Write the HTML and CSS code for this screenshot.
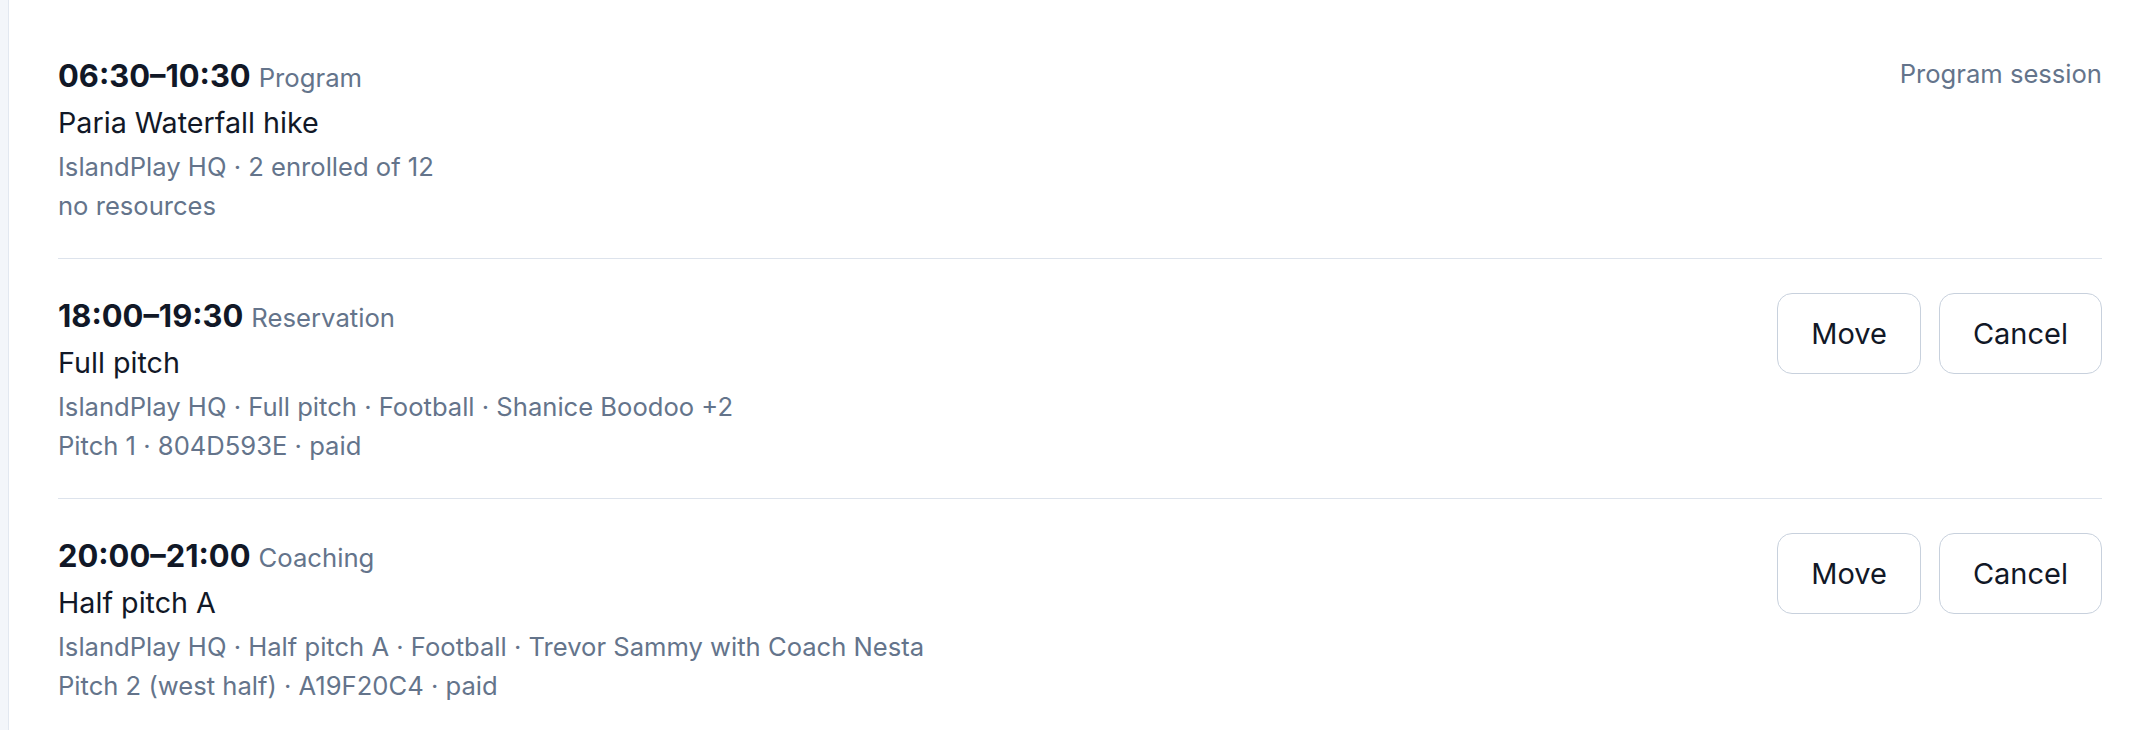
FILE: index.html
```html
<!DOCTYPE html>
<html lang="en">
<head>
<meta charset="utf-8">
<title>Schedule</title>
<link rel="stylesheet" href="styles.css">
</head>
<body>
<main class="panel">
  <ul class="list">
    <li class="item">
      <div class="info">
        <div class="time-line"><span class="time">06:30–10:30</span><span class="kind">Program</span></div>
        <div class="title">Paria Waterfall hike</div>
        <div class="meta">IslandPlay HQ · 2 enrolled of 12</div>
        <div class="meta">no resources</div>
      </div>
      <div class="side-note">Program session</div>
    </li>
    <li class="item">
      <div class="info">
        <div class="time-line"><span class="time">18:00–19:30</span><span class="kind">Reservation</span></div>
        <div class="title">Full pitch</div>
        <div class="meta">IslandPlay HQ · Full pitch · Football · Shanice Boodoo +2</div>
        <div class="meta">Pitch 1 · 804D593E · paid</div>
      </div>
      <div class="actions">
        <button class="btn" type="button">Move</button>
        <button class="btn" type="button">Cancel</button>
      </div>
    </li>
    <li class="item">
      <div class="info">
        <div class="time-line"><span class="time">20:00–21:00</span><span class="kind">Coaching</span></div>
        <div class="title">Half pitch A</div>
        <div class="meta">IslandPlay HQ · Half pitch A · Football · Trevor Sammy with Coach Nesta</div>
        <div class="meta">Pitch 2 (west half) · A19F20C4 · paid</div>
      </div>
      <div class="actions">
        <button class="btn" type="button">Move</button>
        <button class="btn" type="button">Cancel</button>
      </div>
    </li>
  </ul>
</main>
</body>
</html>
```
FILE: styles.css
```css
html, body {
  margin: 0;
  padding: 0;
}

body {
  background: #f3f6fa;
  font-family: Inter, "Noto Sans", sans-serif;
  color: #0f172a;
  height: 730px;
  overflow: hidden;
}

.panel {
  margin-left: 8px;
  border-left: 1px solid #e2e8f0;
  background: #ffffff;
  min-height: 730px;
  padding: 19px 38px 0 49px;
  box-sizing: border-box;
}

.list {
  list-style: none;
  margin: 0;
  padding: 0;
}

.item {
  display: flex;
  justify-content: space-between;
  align-items: flex-start;
  padding: 34px 0 33px;
  border-bottom: 1px solid #dde3ec;
}

.item:last-child {
  border-bottom: none;
}

.time-line {
  font-size: 30.9px;
  line-height: 46px;
  white-space: nowrap;
}

.time {
  font-weight: 700;
  color: #111827;
}

.kind {
  font-size: 25.7px;
  line-height: 1;
  margin-left: 8px;
  color: #64748b;
}

.title {
  font-size: 28.7px;
  line-height: 48px;
  color: #111827;
}

.meta {
  font-size: 25.6px;
  line-height: 39px;
  color: #64748b;
}

.side-note {
  font-size: 25.6px;
  line-height: 42px;
  color: #64748b;
}

.actions {
  display: flex;
  gap: 18px;
}

.btn {
  font-family: inherit;
  font-size: 29px;
  line-height: 45px;
  color: #111827;
  background: #ffffff;
  border: 1px solid #c8d1dd;
  border-radius: 15px;
  padding: 17px 33px;
  cursor: pointer;
}
```
